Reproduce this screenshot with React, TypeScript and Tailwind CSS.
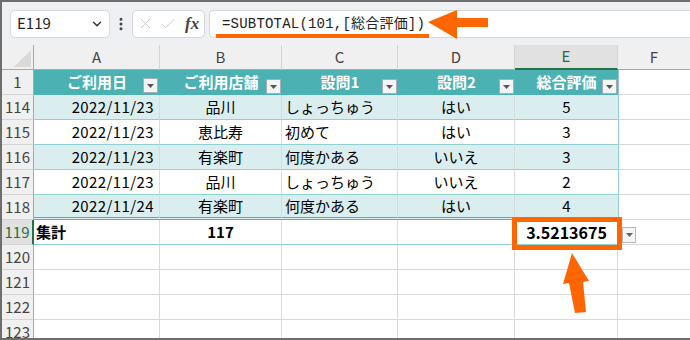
import { ChevronDown, EllipsisVertical, X, Check } from 'lucide-react';

const font = "font-['Noto_Sans_CJK_JP','Noto_Sans',sans-serif]";

const colW = ['w-[126px]', 'w-[122px]', 'w-[116px]', 'w-[117px]', 'w-[103px]'];
const align = ['justify-end pr-[5px]', 'justify-center', 'justify-start pl-[3px]', 'justify-center', 'justify-center'];
const letters = ['A', 'B', 'C', 'D', 'E'];
const heads = ['ご利用日', 'ご利用店舗', '設問1', '設問2', '総合評価'];

const rows = [
  { n: 114, band: true, v: ['2022/11/23', '品川', 'しょっちゅう', 'はい', '5'] },
  { n: 115, band: false, v: ['2022/11/23', '恵比寿', '初めて', 'はい', '3'] },
  { n: 116, band: true, v: ['2022/11/23', '有楽町', '何度かある', 'いいえ', '3'] },
  { n: 117, band: false, v: ['2022/11/23', '品川', 'しょっちゅう', 'いいえ', '2'] },
  { n: 118, band: true, v: ['2022/11/24', '有楽町', '何度かある', 'はい', '4'] },
];

function RowHead({ n, active }: { n: number | string; active?: boolean }) {
  return (
    <div
      className={`w-[32px] h-[25px] shrink-0 flex items-center justify-center border-b border-b-[#d4d4d4] text-[15px] font-normal ${
        active
          ? 'bg-[#e1e1e1] text-[#217346] border-r-2 border-r-[#217346]'
          : 'bg-[#f0f0f0] text-[#444] border-r border-r-[#a9a9a9]'
      }`}
    >
      {n}
    </div>
  );
}

function FilterButton({ className = '' }: { className?: string }) {
  return (
    <div
      className={`absolute w-[15px] h-[15px] bg-[#f4f4f4] border border-[#a7adb5] flex items-center justify-center ${className}`}
    >
      <svg width="7" height="4" viewBox="0 0 7 4">
        <polygon points="0,0 7,0 3.5,4" fill="#555" />
      </svg>
    </div>
  );
}

export default function App() {
  return (
    <div
      className={`relative w-[690px] h-[340px] overflow-hidden bg-white border-t-2 border-l-2 border-b-2 border-[#6e6e6e] ${font}`}
    >
      {/* formula bar */}
      <div className="h-[43px] bg-[#eef0f3] flex items-center">
        <div className="ml-[8px] w-[100px] h-[28px] bg-white border border-[#d6d6d6] rounded-[5px] flex items-center justify-between pl-[6px] pr-[5px] text-[15px] text-[#222]">
          <span>E119</span>
          <ChevronDown size={14} strokeWidth={2.5} color="#333" />
        </div>
        <div className="w-[22px] flex justify-center">
          <EllipsisVertical size={16} strokeWidth={2.5} color="#444" />
        </div>
        <div className="w-[73px] h-[28px] bg-white border border-[#d6d6d6] rounded-[5px] flex items-center pl-[4px] gap-[5px]">
          <X size={17} strokeWidth={1.2} color="#c4c4c4" />
          <Check size={18} strokeWidth={1.2} color="#c4c4c4" />
          <span className="ml-[3px] font-['Liberation_Serif',serif] italic font-bold text-[17px] text-[#444] leading-none">
            fx
          </span>
        </div>
        <div className="relative ml-[4px] flex-1 h-[28px] bg-white border border-r-0 border-[#d6d6d6] rounded-l-[5px] flex items-center pl-[12px]">
          <span className="text-[14px] text-[#222] font-['Liberation_Mono','Noto_Sans_CJK_JP',monospace] tracking-[0.2px]">
            =SUBTOTAL(101,[<span className={font}>総合評価</span>])
          </span>
          <div className="absolute left-[6px] top-[23px] w-[213px] h-[4px] bg-[#ff6600]" />
          <svg className="absolute left-[218px] top-[-1px]" width="60" height="30" viewBox="0 0 60 30">
            <polygon points="0,12 29,0 29,8 60,8 60,17 29,17 29,29" fill="#ff6600" />
          </svg>
        </div>
      </div>

      {/* column headers */}
      <div className="flex h-[25px] text-[15px]">
        <div className="w-[32px] shrink-0 bg-[#f0f0f0] border-r border-b border-[#a9a9a9] relative">
          <svg className="absolute right-[2px] bottom-[2px]" width="17" height="17" viewBox="0 0 17 17">
            <polygon points="17,0 17,17 0,17" fill="#d9d9d9" />
          </svg>
        </div>
        {letters.map((l, i) => (
          <div
            key={l}
            className={`${colW[i]} shrink-0 flex items-center justify-center border-r border-r-[#d4d4d4] ${
              l === 'E'
                ? 'bg-[#e1e1e1] text-[#1e6b47] border-b-2 border-b-[#217346]'
                : 'bg-[#f0f0f0] text-[#444] border-b border-b-[#a9a9a9]'
            }`}
          >
            {l}
          </div>
        ))}
        <div className="flex-1 bg-[#f0f0f0] text-[#444] border-b border-b-[#a9a9a9] flex items-center justify-center">
          F
        </div>
      </div>

      {/* table header row */}
      <div className="flex text-[15px]">
        <RowHead n={1} />
        {heads.map((h, i) => (
          <div
            key={h}
            className={`${colW[i]} h-[25px] shrink-0 relative flex items-center justify-center bg-[#4bb1b3] text-white font-bold`}
          >
            {h}
            <FilterButton className={i === 0 ? 'right-[2px] bottom-[2px]' : 'right-[1px] bottom-[1px]'} />
          </div>
        ))}
        <div className="flex-1 h-[25px] border-b border-[#d9d9d9] border-l border-l-[#8fd0d0]" />
      </div>

      {/* data rows */}
      {rows.map((r) => (
        <div key={r.n} className="flex text-[15px] text-black">
          <RowHead n={r.n} />
          {r.v.map((v, i) => (
            <div
              key={i}
              className={`${colW[i]} h-[25px] shrink-0 flex items-center ${align[i]} ${
                r.band ? 'bg-[#daeef0]' : 'bg-white'
              } ${
                r.n === 118 ? 'border-b-[3px] border-double border-b-[#5aaeb0]' : 'border-b border-b-[#8fd0d0]'
              } ${i === 4 ? '' : 'border-r border-r-[#d9dcdc]'} ${i === 0 ? 'tracking-[0.4px]' : ''}`}
            >
              {v}
            </div>
          ))}
          <div className="flex-1 h-[25px] border-b border-[#d9d9d9] border-l border-l-[#8fd0d0]" />
        </div>
      ))}

      {/* total row */}
      <div className="flex text-[15px] text-black">
        <RowHead n={119} active />
        <div className={`${colW[0]} h-[25px] shrink-0 flex items-center pl-[2px] font-bold border-r border-r-[#d9dcdc] border-b border-b-[#8fd0d0]`}>
          集計
        </div>
        <div className={`${colW[1]} h-[25px] shrink-0 flex items-center justify-center font-bold border-r border-r-[#d9dcdc] border-b border-b-[#8fd0d0]`}>
          117
        </div>
        <div className={`${colW[2]} h-[25px] shrink-0 border-r border-r-[#d9dcdc] border-b border-b-[#8fd0d0]`} />
        <div className={`${colW[3]} h-[25px] shrink-0 border-r border-r-[#d9dcdc] border-b border-b-[#8fd0d0]`} />
        <div className={`${colW[4]} h-[25px] shrink-0 relative z-10 flex items-center justify-center font-bold border-b border-b-[#8fd0d0]`}>
          <span className="text-[16px]">3.5213675</span>
          <div className="absolute left-[-3px] top-[-3px] w-[110px] h-[33px] border-[5px] border-[#ff6600]" />
          <div className="absolute left-[107px] top-[7px] w-[14px] h-[16px] bg-[#f4f4f4] border border-[#b5b9be] flex items-center justify-center">
            <svg width="7" height="4" viewBox="0 0 7 4">
              <polygon points="0,0 7,0 3.5,4" fill="#666" />
            </svg>
          </div>
        </div>
        <div className="flex-1 h-[25px] border-b border-[#d9d9d9] border-l border-l-[#8fd0d0]" />
      </div>

      {/* empty rows */}
      {[120, 121, 122, 123].map((n) => (
        <div key={n} className="flex text-[15px]">
          <RowHead n={n} />
          {colW.map((w, i) => (
            <div key={i} className={`${w} h-[25px] shrink-0 border-r border-b border-[#d9d9d9]`} />
          ))}
          <div className="flex-1 h-[25px] border-b border-[#d9d9d9]" />
        </div>
      ))}

      {/* pointer arrow */}
      <svg className="absolute left-[-2px] top-[-2px] pointer-events-none z-20" width="690" height="340" viewBox="0 0 690 340">
        <polygon points="572,253 589,281 583,282 586,312 575,313 569,283 563,284" fill="#ff6600" />
      </svg>
    </div>
  );
}
